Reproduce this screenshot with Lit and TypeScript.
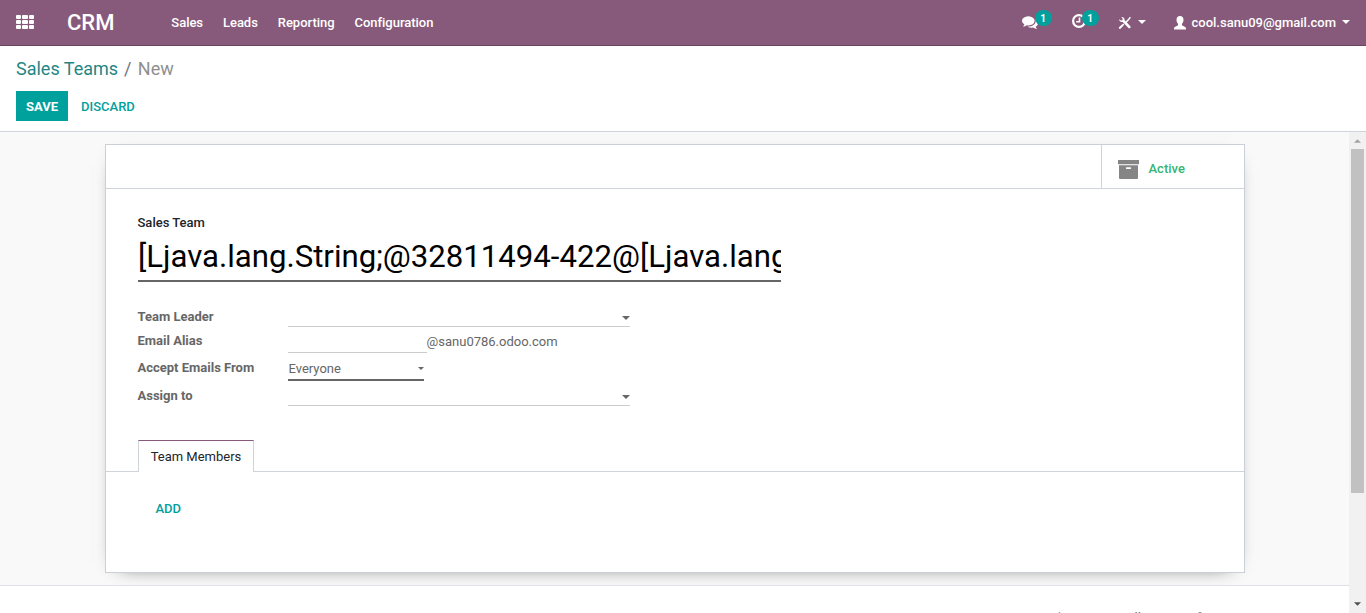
import { LitElement, html, css, svg } from "lit";
import { customElement } from "lit/decorators.js";

const icon = (cls: string, viewBox: string, body: unknown) =>
  html`<svg class="icon ${cls}" viewBox=${viewBox} aria-hidden="true">${body}</svg>`;

const comments = svg`<path d="M1408 768q0 139-94 257t-256.5 186.5-353.5 68.5q-86 0-176-16-124 88-278 128-36 9-86 16h-3q-11 0-20.5-8t-11.5-21q-1-3-1-6.5t.5-6.5 2-6l2.5-5 3.5-5.5 4-5 4.5-5 4-4.5q5-6 23-25t26-29.5 22.5-29 25-38.5 20.5-44q-124-72-195-177t-71-224q0-139 94-257t256.5-186.5 353.5-68.5 353.5 68.5 256.5 186.5 94 257zm384 256q0 120-71 224.5t-195 176.5q10 24 20.5 44t25 38.5 22.5 29 26 29.5 23 25q1 1 4 4.5t4.5 5 4 5 3.5 5.5l2.5 5 2 6 .5 6.5-1 6.5q-3 14-13 22t-22 7q-50-7-86-16-154-40-278-128-90 16-176 16-271 0-472-132 58 4 88 4 161 0 309-45t264-129q125-92 192-212t67-254q0-77-23-152 129 71 204 178t75 230z"/>`;
const clock = svg`<circle cx="7" cy="7" r="5.9" fill="none" stroke="currentColor" stroke-width="2.200"/><path d="M6.700 3.500h1.600v5H4.200V7h2.500z"/>`;
const tools = svg`<path d="M1.2 3.2 3 4.6l1.4-.4.3-1.5L3.300 1c1.700-.4 3.500.9 3.200 3.100l5.800 6.100c1.100 1.200-.6 2.900-1.800 1.800L4.700 6C2.500 6.400.9 4.900 1.200 3.200z"/><path d="M12 .7l.9.900-1.500 2.200L8 7.200l-.9-.9 3.300-3.700zM5.300 7.500l1.100 1.100-3.600 4c-1.100 1.100-2.700-.5-1.600-1.600z"/>`;
const user = svg`<path d="M6 0c2.200 0 3.500 1.500 3.500 3.800 0 1.700-.6 3.200-1.500 4v1.500c.5.900 3.900 1.100 4 3.200V13.500H0v-1c.1-2.100 3.500-2.300 4-3.200V7.800C3.100 7 2.500 5.500 2.500 3.800 2.500 1.500 3.800 0 6 0z"/>`;
const archive = svg`<path fill-rule="evenodd" d="M0 0h21v4.300H0zM1 5.300h19V18q0 1-1 1H2q-1 0-1-1zM8.700 7.300q-.8 0-.8.900t.8.800h3.600q.8 0 .8-.8t-.8-.9z"/>`;
const caret = svg`<path d="M0 0h8L4 4z"/>`;

@customElement("app-root")
export class AppRoot extends LitElement {
  static styles = css`
    :host { display: flex; flex-direction: column; height: 613px; overflow: hidden; font: 13px/20px Roboto, sans-serif; color: #666; background: #fff; }
    * { box-sizing: border-box; }
    .icon { display: block; flex: none; fill: currentColor; }
    .navbar { display: flex; height: 46px; flex: none; background: #875a7b; border-bottom: 1px solid #68465f; color: #fff; font-weight: 500; }
    .apps { display: grid; grid-template-columns: repeat(3, 5.4px); grid-auto-rows: 4.200px; gap: 1px; padding: 14.500px 0 0 16px; width: 67px; }
    .apps i { background: #fff; border-radius: 1px; }
    .brand { width: 104.300px; font-size: 22px; line-height: 45px; }
    .menu { display: flex; gap: 19.900px; line-height: 45px; letter-spacing: -0.02px; }
    .systray { display: flex; margin-left: auto; padding-right: 16px; line-height: 45px; }
    .tray { display: flex; position: relative; }
    .messages { width: 50px; padding-top: 14px; }
    .activities { width: 46px; padding-top: 14px; }
    .debug { width: 56px; padding-top: 16px; gap: 7px; }
    .i-comments { width: 16px; height: 16px; }
    .i-clock { width: 14px; height: 14px; }
    .i-tools { width: 13px; height: 14px; }
    .i-user { width: 12px; height: 14px; margin: 16px 5.500px 0 0; }
    .i-caret { width: 8px; height: 4px; }
    .debug .i-caret { margin-top: 4px; }
    .account .i-caret { margin: 20px 0 0 6px; }
    .badge { position: absolute; top: 10px; left: 12.500px; width: 17px; height: 16px; border-radius: 8px; background: #00a09d; font: 700 10px/17px Roboto, sans-serif; text-align: center; }
    .activities .badge { left: 9.500px; }
    .panel { height: 86px; flex: none; padding: 12px 16px 0; border-bottom: 1px solid #ced4da; background: #fff; }
    .crumbs { display: flex; font-size: 18px; line-height: 22px; color: #8f8f8f; }
    .crumbs a { color: #1f8684; }
    .crumbs .slash { padding: 0 6.300px 0 6px; color: #6c757d; }
    .actions { display: flex; padding-top: 11px; font-weight: 500; line-height: 30px; color: #00a09d; }
    .save { height: 30px; width: 52px; margin-right: 13px; text-align: center; background: #00a09d; color: #fff; font-weight: 700; line-height: 31px; }
    .discard { line-height: 31px; }
    .body { display: flex; flex: 1; min-height: 0; }
    .content { flex: 1; min-width: 0; background: #f9f9f9; overflow: hidden; }
    .sheet { width: 1140px; height: 429px; margin: 12px 0 12px 105px; border: 1px solid #cacfd8; background: #fff; box-shadow: 0 5px 20px -15px #000; }
    .buttons { display: flex; justify-content: flex-end; height: 44px; border-bottom: 1px solid #ced4da; }
    .stat { display: flex; width: 143px; padding: 14px 0 0 16px; gap: 9.500px; border-left: 1px solid #ced4da; font-weight: 500; color: #38b574; }
    .stat span { line-height: 20px; }
    .i-archive { width: 21px; height: 19px; color: #858585; margin-top: 1px; }
    .form { padding: 24px 32px 0 31.500px; }
    .title-label { color: #212529; font-weight: 500; line-height: 20px; }
    .title { width: 643px; height: 49px; margin: 0 0 18px 0.5px; padding-top: 4px; border-bottom: 2px solid #666; overflow: hidden; white-space: nowrap; font-size: 31.160px; line-height: 40px; color: #000; }
    .fields { display: grid; grid-template-columns: 150.500px 342px; grid-template-rows: 27px 26px 28px 25px; }
    label { font-weight: 700; line-height: 20px; }
    .l1 { padding-top: 7px; } .l2 { padding-top: 4px; } .l3 { padding-top: 5px; } .l4 { padding-top: 5px; }
    .input { display: flex; justify-content: flex-end; align-items: flex-end; border-bottom: 1px solid #ccc; padding-bottom: 6px; }
    .alias { display: flex; }
    .alias-input { width: 138.600px; border-bottom: 1px solid #ccc; }
    .alias span { padding-top: 5px; }
    .select { display: flex; justify-content: space-between; width: 136px; height: 28px; padding: 6px 0 0 0.5px; border-bottom: 2px solid #666; }
    .select .i-caret { width: 6px; height: 3px; margin-top: 8px; }
    .tabs { display: flex; height: 32px; margin-top: 34px; border-bottom: 1px solid #ced4da; padding-left: 32px; }
    .tab { height: 32px; width: 116px; border: 1px solid #ced4da; border-top-color: #875a7b; border-bottom: 0; background: #fff; color: #212529; text-align: center; line-height: 32px; }
    .add { padding: 27px 49.500px; font-weight: 500; color: #00a09d; }
    .chatter { display: flex; height: 120px; border-top: 1px solid #dee2e6; background: #fff; padding: 22px 0 0 1052px; color: #666; }
    .clip { width: 11px; height: 14px; margin: 4px 57px 0 0; }
    .follow { width: 75px; }
    .i-person { width: 10px; height: 12px; margin-top: 4px; }
    .scroll { display: flex; flex-direction: column; align-items: center; width: 17px; flex: none; background: #f1f1f1; }
    .arrow { width: 7px; height: 4px; }
    .up { margin: 7px 0 6px; color: #a3a3a3; transform: scaleY(-1); }
    .thumb { width: 13px; height: 344px; background: #c1c1c1; }
    .down { margin-top: auto; margin-bottom: 7px; color: #505050; }
  `;

  render() {
    return html`
      <nav class="navbar">
        <div class="apps">${Array.from({ length: 9 }, () => html`<i></i>`)}</div>
        <div class="brand">CRM</div>
        <div class="menu">${["Sales", "Leads", "Reporting", "Configuration"].map((m) => html`<span>${m}</span>`)}</div>
        <div class="systray">
          <div class="tray messages">${icon("i-comments", "0 0 1792 1792", comments)}<span class="badge">1</span></div>
          <div class="tray activities">${icon("i-clock", "0 0 14 14", clock)}<span class="badge">1</span></div>
          <div class="tray debug">${icon("i-tools", "0 0 13 14", tools)}${icon("i-caret", "0 0 8 4", caret)}</div>
          <div class="tray account">${icon("i-user", "0 0 12 14", user)}<span>cool.sanu09@gmail.com</span>${icon("i-caret", "0 0 8 4", caret)}</div>
        </div>
      </nav>
      <header class="panel">
        <div class="crumbs"><a>Sales Teams</a><span class="slash">/</span><span>New</span></div>
        <div class="actions"><span class="save">SAVE</span><span class="discard">DISCARD</span></div>
      </header>
      <div class="body">
        <main class="content">
          <section class="sheet">
            <div class="buttons"><div class="stat">${icon("i-archive", "0 0 21 19", archive)}<span>Active</span></div></div>
            <div class="form">
              <div class="title-label">Sales Team</div>
              <div class="title">[Ljava.lang.String;@32811494-422@[Ljava.lang</div>
              <div class="fields">
                <label class="l1">Team Leader</label><div class="input">${icon("i-caret", "0 0 8 4", caret)}</div>
                <label class="l2">Email Alias</label><div class="alias"><div class="alias-input"></div><span>@sanu0786.odoo.com</span></div>
                <label class="l3">Accept Emails From</label><div class="select"><span>Everyone</span>${icon("i-caret", "0 0 8 4", caret)}</div>
                <label class="l4">Assign to</label><div class="input">${icon("i-caret", "0 0 8 4", caret)}</div>
              </div>
            </div>
            <div class="tabs"><div class="tab">Team Members</div></div>
            <div class="add">ADD</div>
          </section>
          <section class="chatter">
            ${icon("clip", "0 0 11 14", svg`<path d="M3 9 7 5M1.500 7.500 5.500 2q2-2.500 4 0t0 4l-5 6" fill="none" stroke="currentColor"/>`)}
            <span class="follow">Follow</span>${icon("i-person", "0 0 12 14", user)}
          </section>
        </main>
        <div class="scroll">${icon("arrow up", "0 0 8 4", caret)}<div class="thumb"></div>${icon("arrow down", "0 0 8 4", caret)}</div>
      </div>
    `;
  }
}
